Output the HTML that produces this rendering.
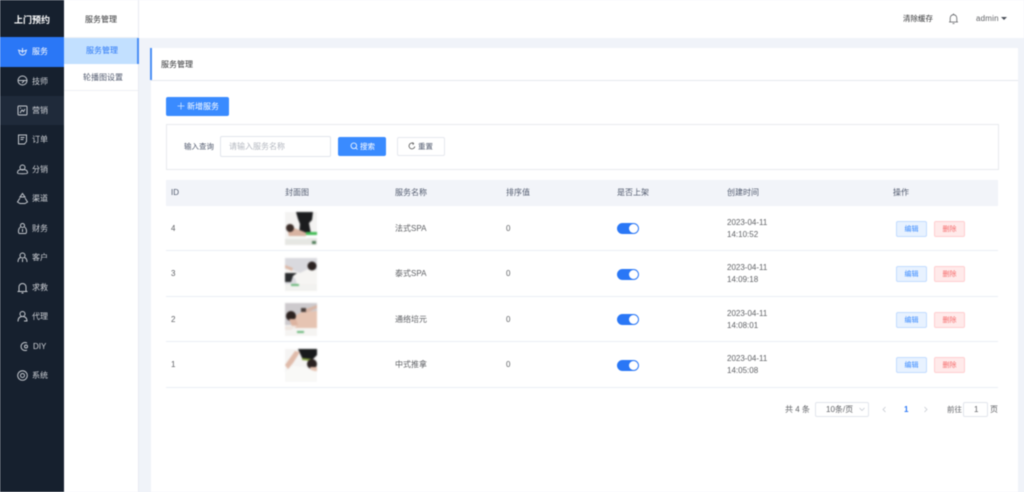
<!DOCTYPE html>
<html lang="zh"><head><meta charset="utf-8"><title>服务管理</title>
<style>
*{box-sizing:border-box}
html,body{margin:0;padding:0}
body{width:1024px;height:492px;overflow:hidden;position:relative;background:#f0f3f9;font:8px "Liberation Sans","Noto Sans CJK SC",sans-serif;color:#606266}
#w{position:absolute;left:0;top:0;width:1024px;height:492px;filter:blur(.4px)}
.a{position:absolute}
.t{position:absolute;white-space:nowrap;line-height:12px;transform:translateY(-5px)}
.s{font-size:7.500px}
.nav{position:absolute;left:0;width:64px;height:30px;color:#d0d3d8}
.nav span{position:absolute;left:32px;top:9px;line-height:12px;white-space:nowrap}
.nav svg{position:absolute;left:16px;top:8px;width:13px;height:13px;fill:none;stroke:#c4c8ce;stroke-width:1}
.line{position:absolute;left:166px;width:832px;height:1px;background:#ebeef5}
.btn{position:absolute;border-radius:2px;text-align:center;line-height:15px;height:16px;width:31px;font-size:7px}
.e{left:896px;background:#e8f2ff;border:1px solid #c3dcff;color:#3a8bff}
.d{left:934px;background:#ffeaea;border:1px solid #ffcfd0;color:#f56c6c}
.sw{position:absolute;left:617px;width:22px;height:11px;border-radius:6px;background:#2a77f6}
.sw:after{content:"";position:absolute;right:1px;top:1px;width:9px;height:9px;border-radius:50%;background:#fff}
.th{color:#515a6e}
.img{position:absolute;left:285px;width:32px;height:33px;filter:blur(.8px)}
</style></head><body><div id="w">

<div class="a" style="left:0;top:0;width:1024px;height:38px;background:#fff"></div>
<div class="a" style="left:0;top:0;width:64px;height:492px;background:#16202e"></div>
<div class="a" style="left:64px;top:0;width:75px;height:492px;background:#fff;border-right:1px solid #e8ebf1"></div>

<div class="t" style="left:14px;top:18.500px;font-size:9px;color:#fff;font-weight:bold">上门预约</div>
<div class="nav" style="top:37px;background:#2a77f6;color:#fff"><svg viewBox="0 0 13 13" style="stroke:#dfe9fb"><path d="M2 5l4.500 1.500L11 5M3 5.500c0 3 1.500 4.500 3.500 4.500S10 8.500 10 5.500M6.500 3v5"/></svg><span>服务</span></div>
<div class="nav" style="top:66px"><svg viewBox="0 0 13 13"><circle cx="6.500" cy="6.500" r="4.500"/><path d="M2.500 6.500h8M6 9l2-2"/></svg><span style="top:10px">技师</span></div>
<div class="nav" style="top:96px;background:#1f2a3a;height:29px"><svg viewBox="0 0 13 13"><rect x="2" y="2" width="9" height="9" rx="1"/><path d="M4 9l2-3 1.500 1.500L9 5M4 4h1"/></svg><span>营销</span></div>
<div class="nav" style="top:125px"><svg viewBox="0 0 13 13"><path d="M2.500 2h8v6.500L8.500 11h-6zM4.500 4.500h4M4.500 6.500h3"/></svg><span>订单</span></div>
<div class="nav" style="top:155px"><svg viewBox="0 0 13 13"><circle cx="6.500" cy="4.500" r="2.500"/><path d="M1.500 10c0-3 2-3.500 5-3.500s5 .5 5 3.500c0 1-10 1-10 0z"/></svg><span>分销</span></div>
<div class="nav" style="top:184px"><svg viewBox="0 0 13 13"><path d="M6.500 1.500L9 5H4zM4 6l-2.500 4 2.500 1.500h5l2.500-1.500L9 6"/></svg><span>渠道</span></div>
<div class="nav" style="top:214px"><svg viewBox="0 0 13 13"><circle cx="6.500" cy="3.500" r="2"/><path d="M4.500 5C2 6.500 2 11.500 3.500 11.500h6c1.500 0 1.500-5-1-6.500M6.500 7v3"/></svg><span>财务</span></div>
<div class="nav" style="top:243px"><svg viewBox="0 0 13 13"><circle cx="6.500" cy="4.500" r="2.500"/><path d="M2 11c0-3 1-4 2.500-4.500M11 11c0-3-1-4-2.500-4.500M6.500 8v3"/></svg><span>客户</span></div>
<div class="nav" style="top:273px"><svg viewBox="0 0 13 13"><path d="M1.500 10.500h10M3 10.500V6a3.500 3.500 0 0 1 7 0v4.500M5.500 12h2"/></svg><span>求救</span></div>
<div class="nav" style="top:302px"><svg viewBox="0 0 13 13"><circle cx="6.500" cy="4" r="2.500"/><path d="M2 11.500c0-3 1.500-5 4.500-5s4.500 2 4.500 5M8 11h3"/></svg><span>代理</span></div>
<div class="nav" style="top:332px"><svg viewBox="0 0 13 13" style="left:18px"><path d="M9 3a4 4 0 1 0 0 7"/><circle cx="8" cy="6.500" r="1.500"/></svg><span style="left:33px">DIY</span></div>
<div class="nav" style="top:361px"><svg viewBox="0 0 13 13"><circle cx="6.500" cy="6.500" r="4.800"/><circle cx="6.500" cy="6.500" r="2"/></svg><span>系统</span></div>

<div class="t" style="left:85px;top:18.500px;color:#303133">服务管理</div>
<div class="a" style="left:64px;top:37px;width:74px;height:1px;background:#eef0f4"></div>
<div class="a" style="left:64px;top:38px;width:75px;height:26px;background:#c2e0ff;border-right:2px solid #4a8ef5"></div>
<div class="t" style="left:86px;top:50px;color:#2a77f6">服务管理</div>
<div class="t" style="left:83px;top:76.500px;color:#515a6e">轮播图设置</div>
<div class="a" style="left:64px;top:90px;width:74px;height:1px;background:#eef0f4"></div>

<div class="t s" style="left:903px;top:18px;color:#303133">清除缓存</div>
<svg class="a" style="left:948px;top:12px" width="11" height="13" viewBox="0 0 11 13" fill="none" stroke="#606266" stroke-width=".8"><path d="M1 10h9M2.200 10V6a3.300 3.300 0 0 1 6.600 0v4M4.500 11.500h2M5.500 1.500v1"/></svg>
<div class="t" style="left:976px;top:18px;color:#606266;letter-spacing:.2px">admin</div>
<div class="a" style="left:1001px;top:17px;border:3px solid transparent;border-top:3.500px solid #4a4f58;border-bottom:0"></div>

<div class="a" style="left:151px;top:48px;width:867px;height:444px;background:#fff"></div>
<div class="a" style="left:150px;top:48px;width:2px;height:32px;background:#4a8ef5"></div>
<div class="a" style="left:151px;top:80px;width:867px;height:1px;background:#e6e8ee"></div>
<div class="t" style="left:161px;top:63.500px;color:#303133">服务管理</div>

<div class="a" style="left:166px;top:97px;width:63px;height:19px;background:#3a8bff;border-radius:2px"></div>
<svg class="a" style="left:177px;top:102px" width="8" height="8" viewBox="0 0 8 8" stroke="#cfe3ff" stroke-width=".8"><path d="M4 .5v7M.5 4h7"/></svg>
<div class="t" style="left:187px;top:105.500px;color:#fff">新增服务</div>

<div class="a" style="left:166px;top:124px;width:833px;height:46px;border:1px solid #e8eaee"></div>
<div class="t s" style="left:184px;top:145.500px;color:#515a6e">输入查询</div>
<div class="a" style="left:220px;top:136px;width:111px;height:21px;border:1px solid #e2e5ec;border-radius:2px"></div>
<div class="t" style="left:229px;top:146px;color:#b4b8c0">请输入服务名称</div>
<div class="a" style="left:338px;top:137px;width:48px;height:19px;background:#3a8bff;border-radius:2px"></div>
<svg class="a" style="left:350px;top:142px" width="8" height="8" viewBox="0 0 8 8" fill="none" stroke="#fff" stroke-width=".8"><circle cx="3.800" cy="3.800" r="2.800"/><path d="M6 6l1.500 1.500"/></svg>
<div class="t s" style="left:360px;top:146px;color:#fff">搜索</div>
<div class="a" style="left:397px;top:137px;width:48px;height:19px;border:1px solid #e6e8ee;border-radius:2px"></div>
<svg class="a" style="left:408px;top:142px" width="8" height="8" viewBox="0 0 8 8" fill="none" stroke="#555" stroke-width=".8"><path d="M6.800 4.500A2.900 2.900 0 1 1 5.500 1.500M4.500.5l1.200 1-1 1.200"/></svg>
<div class="t s" style="left:418px;top:146px;color:#515a6e">重置</div>

<div class="a" style="left:166px;top:180px;width:832px;height:26px;background:#f2f4f9"></div>
<div class="t th" style="left:171px;top:192px">ID</div>
<div class="t th" style="left:285px;top:192px">封面图</div>
<div class="t th" style="left:395px;top:192px">服务名称</div>
<div class="t th" style="left:506px;top:192px">排序值</div>
<div class="t th" style="left:617px;top:192px">是否上架</div>
<div class="t th" style="left:727px;top:192px">创建时间</div>
<div class="t th" style="left:893px;top:192px">操作</div>

<div class="line" style="top:250px"></div>
<div class="line" style="top:296px"></div>
<div class="line" style="top:341px"></div>
<div class="line" style="top:387px"></div>

<!-- row 1 -->
<div class="t" style="left:171px;top:228px">4</div>
<svg class="img" style="top:212px" viewBox="0 0 32 33"><rect width="32" height="33" fill="#f4f3f2"/><path d="M11 0h17l-1 8-3 3 2 11H14l1-10-2-5z" fill="#1b1c1e"/><rect x="0" y="24" width="32" height="9" fill="#e6e7e3"/><path d="M3 20l6-4 8 3 7 3 4 3H4z" fill="#d8b4a2"/><path d="M0 24h22v3H0z" fill="#f5f5f3"/><circle cx="5" cy="16" r="4" fill="#3a2c28"/><rect x="21" y="20" width="11" height="3" fill="#43bb55"/><rect x="21" y="23" width="11" height="3" fill="#fff"/><rect x="27" y="29" width="4" height="3" fill="#54805e"/></svg>
<div class="t" style="left:395px;top:228px">法式SPA</div>
<div class="t" style="left:506px;top:228px">0</div>
<div class="sw" style="top:223px"></div>
<div class="t" style="left:727px;top:221.500px">2023-04-11</div>
<div class="t" style="left:727px;top:233.500px">14:10:52</div>
<div class="btn e" style="top:221px">编辑</div>
<div class="btn d" style="top:221px">删除</div>

<!-- row 2 -->
<div class="t" style="left:171px;top:273px">3</div>
<svg class="img" style="top:258px" viewBox="0 0 32 33"><rect width="32" height="33" fill="#d9d9de"/><path d="M0 26h32v7H0z" fill="#f2f2f0"/><path d="M0 11l7 1 8 3 8-4 9 1v14H12l-2-6-10-4z" fill="#f6f5f3"/><path d="M0 7l8 3-1 3-7-3z" fill="#dcb9a8"/><circle cx="27" cy="8" r="4.500" fill="#2b2322"/><path d="M0 15h12l-4 3-2 6H0z" fill="#2a2c2e"/><rect x="6" y="26" width="8" height="2" fill="#6cb87c"/></svg>
<div class="t" style="left:395px;top:273px">泰式SPA</div>
<div class="t" style="left:506px;top:273px">0</div>
<div class="sw" style="top:269px"></div>
<div class="t" style="left:727px;top:267px">2023-04-11</div>
<div class="t" style="left:727px;top:279px">14:09:18</div>
<div class="btn e" style="top:266px">编辑</div>
<div class="btn d" style="top:266px">删除</div>

<!-- row 3 -->
<div class="t" style="left:171px;top:319px">2</div>
<svg class="img" style="top:303px" viewBox="0 0 32 33"><rect width="32" height="33" fill="#cdcacd"/><rect y="22" width="32" height="11" fill="#f5f4f2"/><path d="M8 14l9-5 15-1v17H10z" fill="#e6c4b2"/><path d="M18 7l14-5v3L21 10z" fill="#d7b5a5"/><circle cx="6" cy="13" r="5" fill="#2c2220"/><path d="M4 16h7l2 6-6 1z" fill="#ddb4a0"/><rect x="16" y="5" width="5" height="4" fill="#4a3f3c"/><path d="M0 23h12l-6 4H0z" fill="#efe7e2"/><rect x="12" y="28" width="7" height="2" fill="#6cb87c"/></svg>
<div class="t" style="left:395px;top:319px">通络培元</div>
<div class="t" style="left:506px;top:319px">0</div>
<div class="sw" style="top:314px"></div>
<div class="t" style="left:727px;top:312.500px">2023-04-11</div>
<div class="t" style="left:727px;top:324.500px">14:08:01</div>
<div class="btn e" style="top:312px">编辑</div>
<div class="btn d" style="top:312px">删除</div>

<!-- row 4 -->
<div class="t" style="left:171px;top:364px">1</div>
<svg class="img" style="top:349px" viewBox="0 0 32 33"><rect width="32" height="33" fill="#f5f4f3"/><path d="M13 0h19v6l-5 5H18z" fill="#18191b"/><path d="M0 16L10 2l5 1-7 11-5 6z" fill="#e0bbaa"/><path d="M17 9l10 1-1 2-9-1z" fill="#7f9a3c"/><circle cx="27" cy="15" r="5" fill="#2a2120"/><path d="M25 18h7v4h-6z" fill="#e5c3b2"/><path d="M0 33V23l8-6 10 1 14 5v10z" fill="#f9f9f7"/></svg>
<div class="t" style="left:395px;top:364px">中式推拿</div>
<div class="t" style="left:506px;top:364px">0</div>
<div class="sw" style="top:360px"></div>
<div class="t" style="left:727px;top:357.500px">2023-04-11</div>
<div class="t" style="left:727px;top:369.500px">14:05:08</div>
<div class="btn e" style="top:357px">编辑</div>
<div class="btn d" style="top:357px">删除</div>

<!-- pagination -->
<div class="t" style="left:785px;top:409px">共 4 条</div>
<div class="a" style="left:815px;top:402px;width:54px;height:15px;border:1px solid #e2e5ec;border-radius:2px"></div>
<div class="t" style="left:826px;top:409px">10条/页</div>
<svg class="a" style="left:859px;top:407px" width="6" height="5" viewBox="0 0 6 5" fill="none" stroke="#c0c4cc" stroke-width=".7"><path d="M.5 1L3 3.500 5.500 1"/></svg>
<svg class="a" style="left:882px;top:406px" width="5" height="7" viewBox="0 0 5 7" fill="none" stroke="#c0c4cc" stroke-width=".7"><path d="M3.500 1L1 3.500 3.500 6"/></svg>
<div class="t" style="left:904px;top:409px;color:#2a77f6;font-weight:bold">1</div>
<svg class="a" style="left:923px;top:406px" width="5" height="7" viewBox="0 0 5 7" fill="none" stroke="#c0c4cc" stroke-width=".7"><path d="M1.500 1L4 3.500 1.500 6"/></svg>
<div class="t s" style="left:947px;top:409px">前往</div>
<div class="a" style="left:963px;top:402px;width:25px;height:15px;border:1px solid #e2e5ec;border-radius:2px"></div>
<div class="t" style="left:974px;top:409px">1</div>
<div class="t" style="left:990px;top:409px">页</div>
</div></body></html>
